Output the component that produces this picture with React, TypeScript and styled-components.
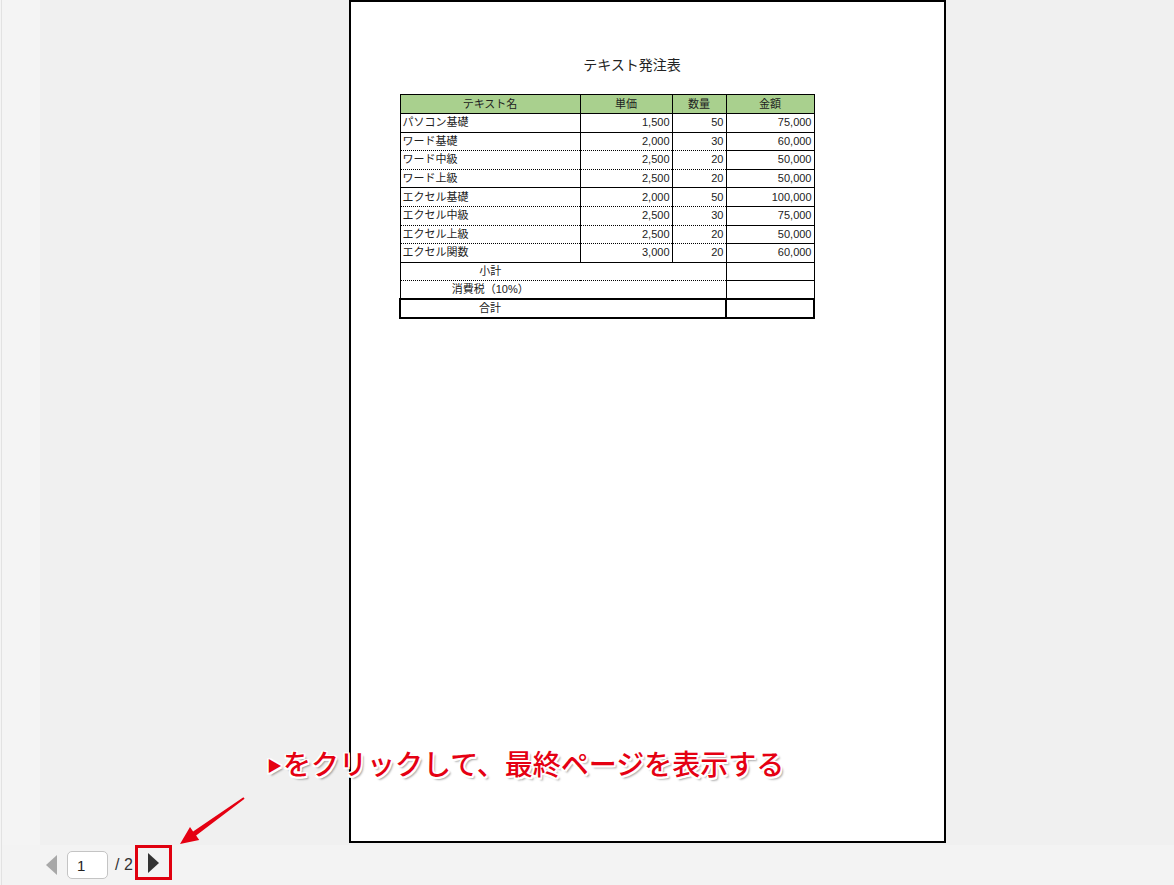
import styled, { createGlobalStyle } from "styled-components";

const GlobalStyle = createGlobalStyle`
    html, body {
        margin: 0;
        padding: 0;
        background: #f4f4f4;
        overflow: hidden;
    }
    * {
        box-sizing: border-box;
    }
`;

type Line = "solid" | "dotted";

type Item = {
    name: string
    price: string
    qty: string
    amount: string
    line: Line
}

const items: Item[] = [
    { name: "パソコン基礎", price: "1,500", qty: "50", amount: "75,000", line: "solid" },
    { name: "ワード基礎", price: "2,000", qty: "30", amount: "60,000", line: "dotted" },
    { name: "ワード中級", price: "2,500", qty: "20", amount: "50,000", line: "dotted" },
    { name: "ワード上級", price: "2,500", qty: "20", amount: "50,000", line: "solid" },
    { name: "エクセル基礎", price: "2,000", qty: "50", amount: "100,000", line: "dotted" },
    { name: "エクセル中級", price: "2,500", qty: "30", amount: "75,000", line: "dotted" },
    { name: "エクセル上級", price: "2,500", qty: "20", amount: "50,000", line: "dotted" },
    { name: "エクセル関数", price: "3,000", qty: "20", amount: "60,000", line: "solid" },
];

const Shell = styled.div`
    position: relative;
    margin-left: 1px;
    border-left: 1px solid #e2e2e2;
    width: 1173px;
    height: 885px;
    display: flex;
    flex-direction: column;
    font-family: "Liberation Sans", "Noto Sans CJK JP", sans-serif;
`;

const Workspace = styled.div`
    display: flex;
    height: 845px;
`;

const SideStrip = styled.div`
    width: 38px;
    background: #f4f4f4;
`;

const Viewer = styled.div`
    flex: 1;
    background: #f0f0f0;
    padding-left: 309px;
`;

const Page = styled.div`
    width: 597px;
    height: 843px;
    background: #fff;
    border: 2px solid #000;
    padding: 54px 0 0 48px;
`;

const Title = styled.div`
    width: 466px;
    text-align: center;
    font-family: "Noto Sans CJK JP", sans-serif;
    font-size: 14px;
    line-height: 16px;
    color: #222;
    margin-bottom: 22px;
`;

const Sheet = styled.table`
    border-collapse: collapse;
    table-layout: fixed;
    width: 414px;
    font-size: 11px;
    color: #222;
`;

const Row = styled.tr<{ $line: Line }>`
    height: 18.6px;
    td {
        border-bottom: 1px ${p => p.$line} #000;
    }
`;

const Cell = styled.td<{ $align?: "left" | "right" | "center"; $open?: boolean }>`
    padding: 0 2px;
    line-height: 1;
    height: 18.6px;
    text-align: ${p => p.$align ?? "left"};
    border-left: ${p => (p.$open ? "none" : "1px solid #000")};
    border-right: ${p => (p.$open ? "none" : "1px solid #000")};
    white-space: nowrap;
`;

const AmountCell = styled(Cell)`
    && {
        border-bottom-style: solid;
    }
`;

const HeadCell = styled.th`
    background: #a9d08e;
    font-weight: normal;
    height: 19px;
    padding: 0;
    border: 1px solid #000;
    line-height: 1;
`;

const TotalRow = styled.tr`
    height: 19px;
    td {
        border: 2px solid #000;
    }
`;

const Toolbar = styled.div`
    height: 40px;
    background: #f3f3f3;
    display: flex;
    align-items: center;
    padding-left: 42px;
`;

const PageButton = styled.button<{ $highlight?: boolean }>`
    display: flex;
    align-items: center;
    justify-content: center;
    background: none;
    padding: 0;
    cursor: pointer;
    border: ${p => (p.$highlight ? "3px solid #e0000f" : "none")};
    width: ${p => (p.$highlight ? "37px" : "14px")};
    height: ${p => (p.$highlight ? "35px" : "28px")};
    margin-top: ${p => (p.$highlight ? "-5px" : "0")};
`;

const PageInput = styled.div`
    width: 41px;
    height: 28px;
    margin-left: 9px;
    border: 1px solid #c4c4c4;
    border-radius: 5px;
    background: #fff;
    font-size: 15px;
    line-height: 28px;
    padding-left: 9px;
    color: #222;
`;

const PageCount = styled.span`
    font-size: 16px;
    color: #333;
    margin: 0 0 0 7px;
    width: 20px;
`;

const Callout = styled.div`
    position: absolute;
    left: 265px;
    top: 747px;
    font-family: "Noto Sans CJK JP", sans-serif;
    font-weight: 500;
    font-size: 28px;
    line-height: 32px;
    color: #e50012;
    white-space: nowrap;
    text-shadow:
        -1.5px 0 0 #fff, 1.5px 0 0 #fff, 0 -1.5px 0 #fff, 0 1.5px 0 #fff,
        -1.5px -1.5px 0 #fff, 1.5px -1.5px 0 #fff, -1.5px 1.5px 0 #fff, 1.5px 1.5px 0 #fff,
        2.5px 3px 2px rgba(0, 0, 0, 0.35);
`;

const Marker = styled.span`
    font-size: 15px;
    vertical-align: 4px;
    margin-right: 1px;
`;

const Pointer = styled.svg`
    position: absolute;
    left: 168px;
    top: 790px;
`;

function Triangle({ color, flip }: { color: string; flip?: boolean }) {
    return (
        <svg width="11" height="20" viewBox="0 0 11 20">
            <path d={flip ? "M11 0 L0 10 L11 20 Z" : "M0 0 L11 10 L0 20 Z"} fill={color} />
        </svg>
    );
}

export default function App() {
    return <>
        <GlobalStyle />
        <Shell>
            <Workspace>
                <SideStrip />
                <Viewer>
                    <Page>
                        <Title>テキスト発注表</Title>
                        <Sheet>
                            <colgroup>
                                <col style={{ width: 180 }} />
                                <col style={{ width: 92 }} />
                                <col style={{ width: 54 }} />
                                <col style={{ width: 88 }} />
                            </colgroup>
                            <thead>
                                <tr>
                                    <HeadCell>テキスト名</HeadCell>
                                    <HeadCell>単価</HeadCell>
                                    <HeadCell>数量</HeadCell>
                                    <HeadCell>金額</HeadCell>
                                </tr>
                            </thead>
                            <tbody>
                                {items.map(item => (
                                    <Row key={item.name} $line={item.line}>
                                        <Cell>{item.name}</Cell>
                                        <Cell $align="right">{item.price}</Cell>
                                        <Cell $align="right">{item.qty}</Cell>
                                        <AmountCell $align="right">{item.amount}</AmountCell>
                                    </Row>
                                ))}
                                <Row $line="dotted">
                                    <Cell $align="center" style={{ borderRight: "none" }}>小計</Cell>
                                    <Cell colSpan={2} $open />
                                    <AmountCell />
                                </Row>
                                <Row $line="solid">
                                    <Cell $align="center" style={{ borderRight: "none" }}>消費税（10%）</Cell>
                                    <Cell colSpan={2} $open />
                                    <AmountCell />
                                </Row>
                                <TotalRow>
                                    <Cell colSpan={3} style={{ paddingRight: 148, textAlign: "center" }}>合計</Cell>
                                    <Cell />
                                </TotalRow>
                            </tbody>
                        </Sheet>
                    </Page>
                </Viewer>
            </Workspace>
            <Toolbar>
                <PageButton>
                    <Triangle color="#a8a8a8" flip />
                </PageButton>
                <PageInput>1</PageInput>
                <PageCount>/ 2</PageCount>
                <PageButton $highlight>
                    <Triangle color="#333" />
                </PageButton>
            </Toolbar>

            <Callout><Marker>▶</Marker>をクリックして、最終ページを表示する</Callout>
            <Pointer width="82" height="60" viewBox="0 0 82 60">
                <polygon
                    points="10,54 29.2,50.1 26.1,45.6 74.6,8.8 73.4,7.2 23.1,41.6 20,37.1"
                    fill="#e50012"
                />
            </Pointer>
        </Shell>
    </>;
}
